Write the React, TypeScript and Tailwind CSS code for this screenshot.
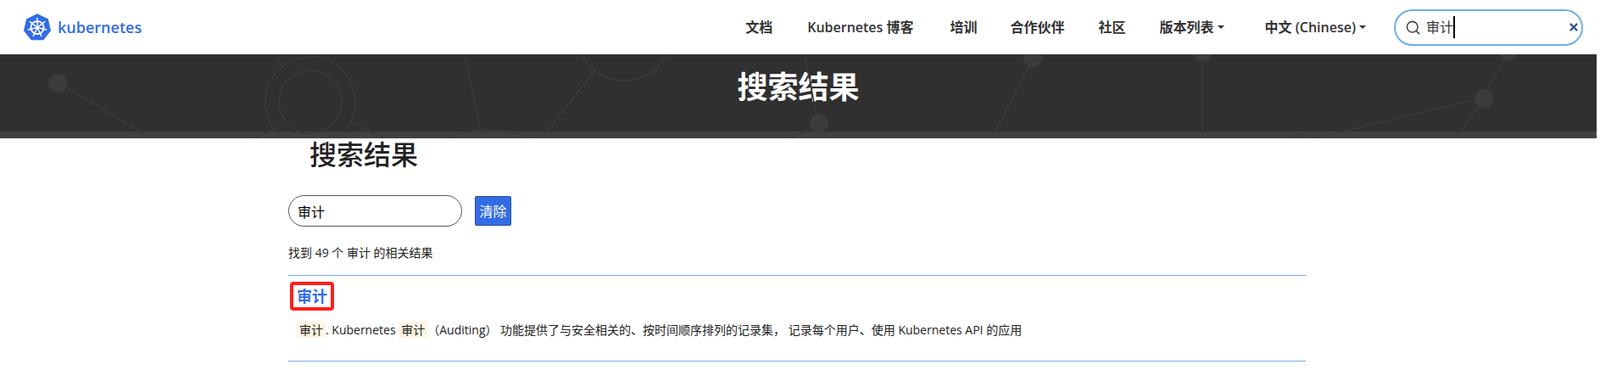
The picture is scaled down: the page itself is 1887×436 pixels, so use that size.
import { Search, X } from "lucide-react";

const NAV_ITEMS = [
  { label: "文档", className: "ml-0" },
  { label: "Kubernetes 博客", className: "ml-[41px]" },
  { label: "培训", className: "ml-[43px]" },
  { label: "合作伙伴", className: "ml-[39px]" },
  { label: "社区", className: "ml-[40px]" },
];

const Caret = () => (
  <span className="ml-[4px] inline-block h-0 w-0 border-x-[4px] border-t-[4px] border-x-transparent border-t-[#333333]"></span>
);

const Logo = () => {
  const spokes = [0, 51.43, 102.86, 154.29, 205.71, 257.14, 308.57];
  return (
    <svg width="32" height="32" viewBox="0 0 32 32" className="shrink-0">
      <polygon
        points="16,1 28.2,6.9 31.2,20 22.8,30.6 9.2,30.6 0.8,20 3.8,6.9"
        fill="#326ce5"
        stroke="#326ce5"
        strokeWidth="1.5"
        strokeLinejoin="round"
      />
      <circle cx="16" cy="16.5" r="7.6" fill="none" stroke="white" strokeWidth="2" />
      {spokes.map((a) => (
        <line
          key={a}
          x1="16"
          y1="16.5"
          x2="16"
          y2="5.5"
          stroke="white"
          strokeWidth="1.5"
          strokeLinecap="round"
          transform={`rotate(${a} 16 16.5)`}
        />
      ))}
      <circle cx="16" cy="16.5" r="2" fill="white" />
    </svg>
  );
};

const HeroPattern = () => (
  <svg
    className="absolute left-0 top-0 h-[99px] w-full"
    viewBox="0 64 1883 99"
    preserveAspectRatio="xMinYMin slice"
    fill="none"
    stroke="#3b3b3b"
    strokeWidth="1.5"
  >
    <circle cx="68" cy="98" r="11" fill="#3c3c3c" stroke="none" />
    <path d="M78 103 L179 163" />
    <circle cx="366" cy="120" r="53" />
    <circle cx="366" cy="120" r="37" />
    <path d="M325 65 L333 78" />
    <path d="M414 144 L454 163" />
    <path d="M299 163 L323 152" />
    <path d="M548 65 L567 153" />
    <circle cx="577" cy="283" r="130" />
    <circle cx="736" cy="39" r="56" />
    <path d="M702 83 L638 163" />
    <path d="M949 65 L963 135" />
    <circle cx="966" cy="145" r="11" fill="#3c3c3c" stroke="none" />
    <path d="M931 163 L957 150" />
    <circle cx="1218" cy="68" r="11" fill="#3c3c3c" stroke="none" />
    <path d="M1213 78 L1170 163" />
    <circle cx="1418" cy="62" r="11" fill="#3c3c3c" stroke="none" />
    <path d="M1418 65 L1418 163" />
    <circle cx="1531" cy="168" r="11" fill="#3c3c3c" stroke="none" />
    <path d="M1550 163 L1741 117" />
    <circle cx="1750" cy="116" r="11" fill="#3c3c3c" stroke="none" />
    <path d="M1753 107 L1775 67" />
    <circle cx="1779" cy="60" r="11" fill="#3c3c3c" stroke="none" />
    <path d="M1743 125 L1717 163" />
  </svg>
);

const App = () => {
  return (
    <div className="h-[436px] w-[1887px] overflow-hidden bg-white font-['Open_Sans','Noto_Sans_CJK_SC',sans-serif] text-[#222222]">
      <nav className="flex h-[64px] items-center pl-[28px]">
        <Logo />
        <span className="ml-[8px] text-[18px] font-semibold text-[#326ce5]">kubernetes</span>
        <div className="ml-[712px] flex items-center text-[16px] font-semibold text-[#333333]">
          {NAV_ITEMS.map((item) => (
            <span key={item.label} className={item.className}>
              {item.label}
            </span>
          ))}
          <span className="ml-[40px] flex items-center">
            版本列表
            <Caret />
          </span>
          <span className="ml-[48px] flex items-center">
            中文 (Chinese)
            <Caret />
          </span>
        </div>
        <div className="ml-[33px] flex h-[43px] w-[223px] items-center rounded-[22px] border-2 border-[#6fafe9] pl-[11px] pr-[2px]">
          <Search className="h-[19px] w-[19px] text-[#444444]" strokeWidth={2} />
          <span className="ml-[6px] text-[16px] leading-none text-[#333333]">审计</span>
          <span className="h-[26px] w-[2px] bg-black"></span>
          <X className="ml-auto h-[14px] w-[14px] text-[#30528f]" strokeWidth={4} />
        </div>
      </nav>

      <section className="relative flex h-[99px] w-[1883px] flex-col bg-[#303030]">
        <div className="flex-1 pt-[14px] text-center text-[36px] font-semibold leading-[50px] text-white">
          搜索结果
        </div>
        <div className="h-[8px] bg-[#414141]"></div>
        <HeroPattern />
      </section>

      <main className="ml-[340px] w-[1200px]">
        <h2 className="ml-[25px] -mt-[3px] text-[32px] font-medium leading-[44px]">搜索结果</h2>
        <div className="mt-[26px] flex items-center">
          <input
            readOnly
            value="审计"
            className="h-[37px] w-[205px] rounded-[19px] border border-[#555555] pl-[10px] text-[16px] text-black outline-none"
          />
          <button className="ml-[15px] h-[35px] w-[43px] rounded-[2px] border border-[#2d4f91] bg-[#326ce5] text-[16px] text-white">
            清除
          </button>
        </div>
        <p className="mt-[21px] text-[14px] leading-[20px]">找到 49 个 审计 的相关结果</p>
        <div className="mt-[16px] h-[102px] border-y border-[#6fafe9]">
          <div className="ml-[2px] mt-[7px] inline-block rounded-[4px] border-[4px] border-[#ff1f1f] px-[4px] text-[18px] font-bold leading-[26px] text-[#326ce5]">
            审计
          </div>
          <p className="ml-[10px] mt-[10px] text-[14px] leading-[25px]">
            <span className="bg-[#fdf5e3] px-[3px]">审计</span>. Kubernetes{" "}
            <span className="bg-[#fdf5e3] px-[3px]">审计</span>（Auditing） 功能提供了与安全相关的、按时间顺序排列的记录集， 记录每个用户、使用 Kubernetes API 的应用
          </p>
        </div>
      </main>
    </div>
  );
};

export default App;
